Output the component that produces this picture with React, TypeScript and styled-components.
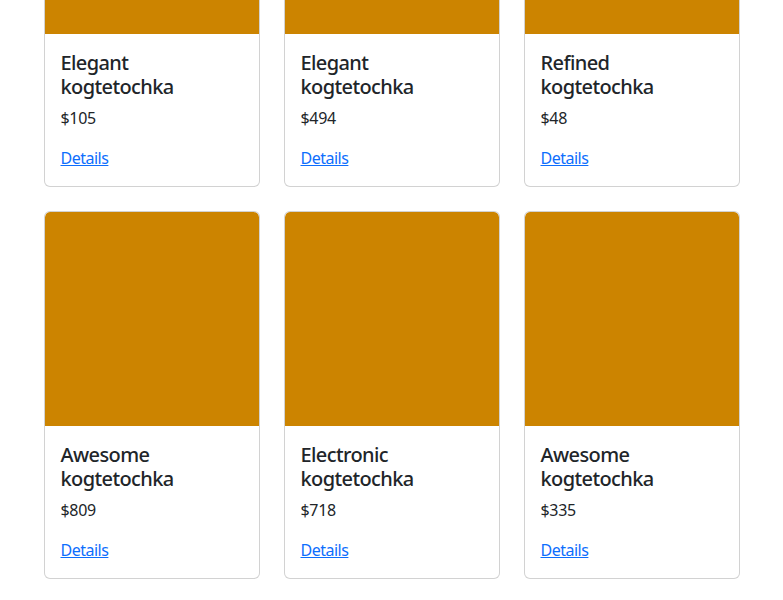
import React from "react";
import styled, { createGlobalStyle } from "styled-components";

const Global = createGlobalStyle`
  html, body { margin: 0; padding: 0; background: #fff; }
  body {
    font-family: "Noto Sans", "Open Sans", sans-serif;
    font-size: 16px;
    line-height: 1.5;
    color: #212529;
    overflow: hidden;
  }
  *, *::before, *::after { box-sizing: border-box; }
`;

const Container = styled.div`
  width: 720px;
  max-width: 100%;
  margin: 0 auto;
  padding: 0 12px;
  margin-top: -181px;
`;

const Grid = styled.div`
  display: grid;
  grid-template-columns: repeat(3, 1fr);
  column-gap: 24px;
  row-gap: 24px;
`;

const Card = styled.div`
  display: flex;
  flex-direction: column;
  border: 1px solid rgba(0, 0, 0, 0.175);
  border-radius: 6px;
  background: #fff;
  overflow: hidden;
`;

const Thumb = styled.div`
  aspect-ratio: 1 / 1;
  width: 100%;
  background: #cc8400;
  border-radius: 5px 5px 0 0;
`;

const Body = styled.div`
  padding: 16px;
`;

const Title = styled.h5`
  margin: 0 0 7px;
  padding-top: 1px;
  font-size: 20px;
  font-weight: 500;
  line-height: 24px;
  letter-spacing: -0.6px;
  color: #212529;
`;

const Price = styled.p`
  margin: 0 0 16px;
  font-size: 16px;
  letter-spacing: -0.3px;
`;

const Link = styled.a`
  color: #0d6efd;
  text-decoration: underline;
  font-size: 16px;
  letter-spacing: -0.5px;
`;

const items = [
  { name: "Elegant kogtetochka", price: 105 },
  { name: "Elegant kogtetochka", price: 494 },
  { name: "Refined kogtetochka", price: 48 },
  { name: "Awesome kogtetochka", price: 809 },
  { name: "Electronic kogtetochka", price: 718 },
  { name: "Awesome kogtetochka", price: 335 },
];

export default function App() {
  return (
    <>
      <Global />
      <Container>
        <Grid>
          {items.map((it, i) => {
            const [first, second] = it.name.split(" ");
            return (
              <Card key={i}>
                <Thumb />
                <Body>
                  <Title>
                    {first}
                    <br />
                    {second}
                  </Title>
                  <Price>${it.price}</Price>
                  <Link href="#">Details</Link>
                </Body>
              </Card>
            );
          })}
        </Grid>
      </Container>
    </>
  );
}
